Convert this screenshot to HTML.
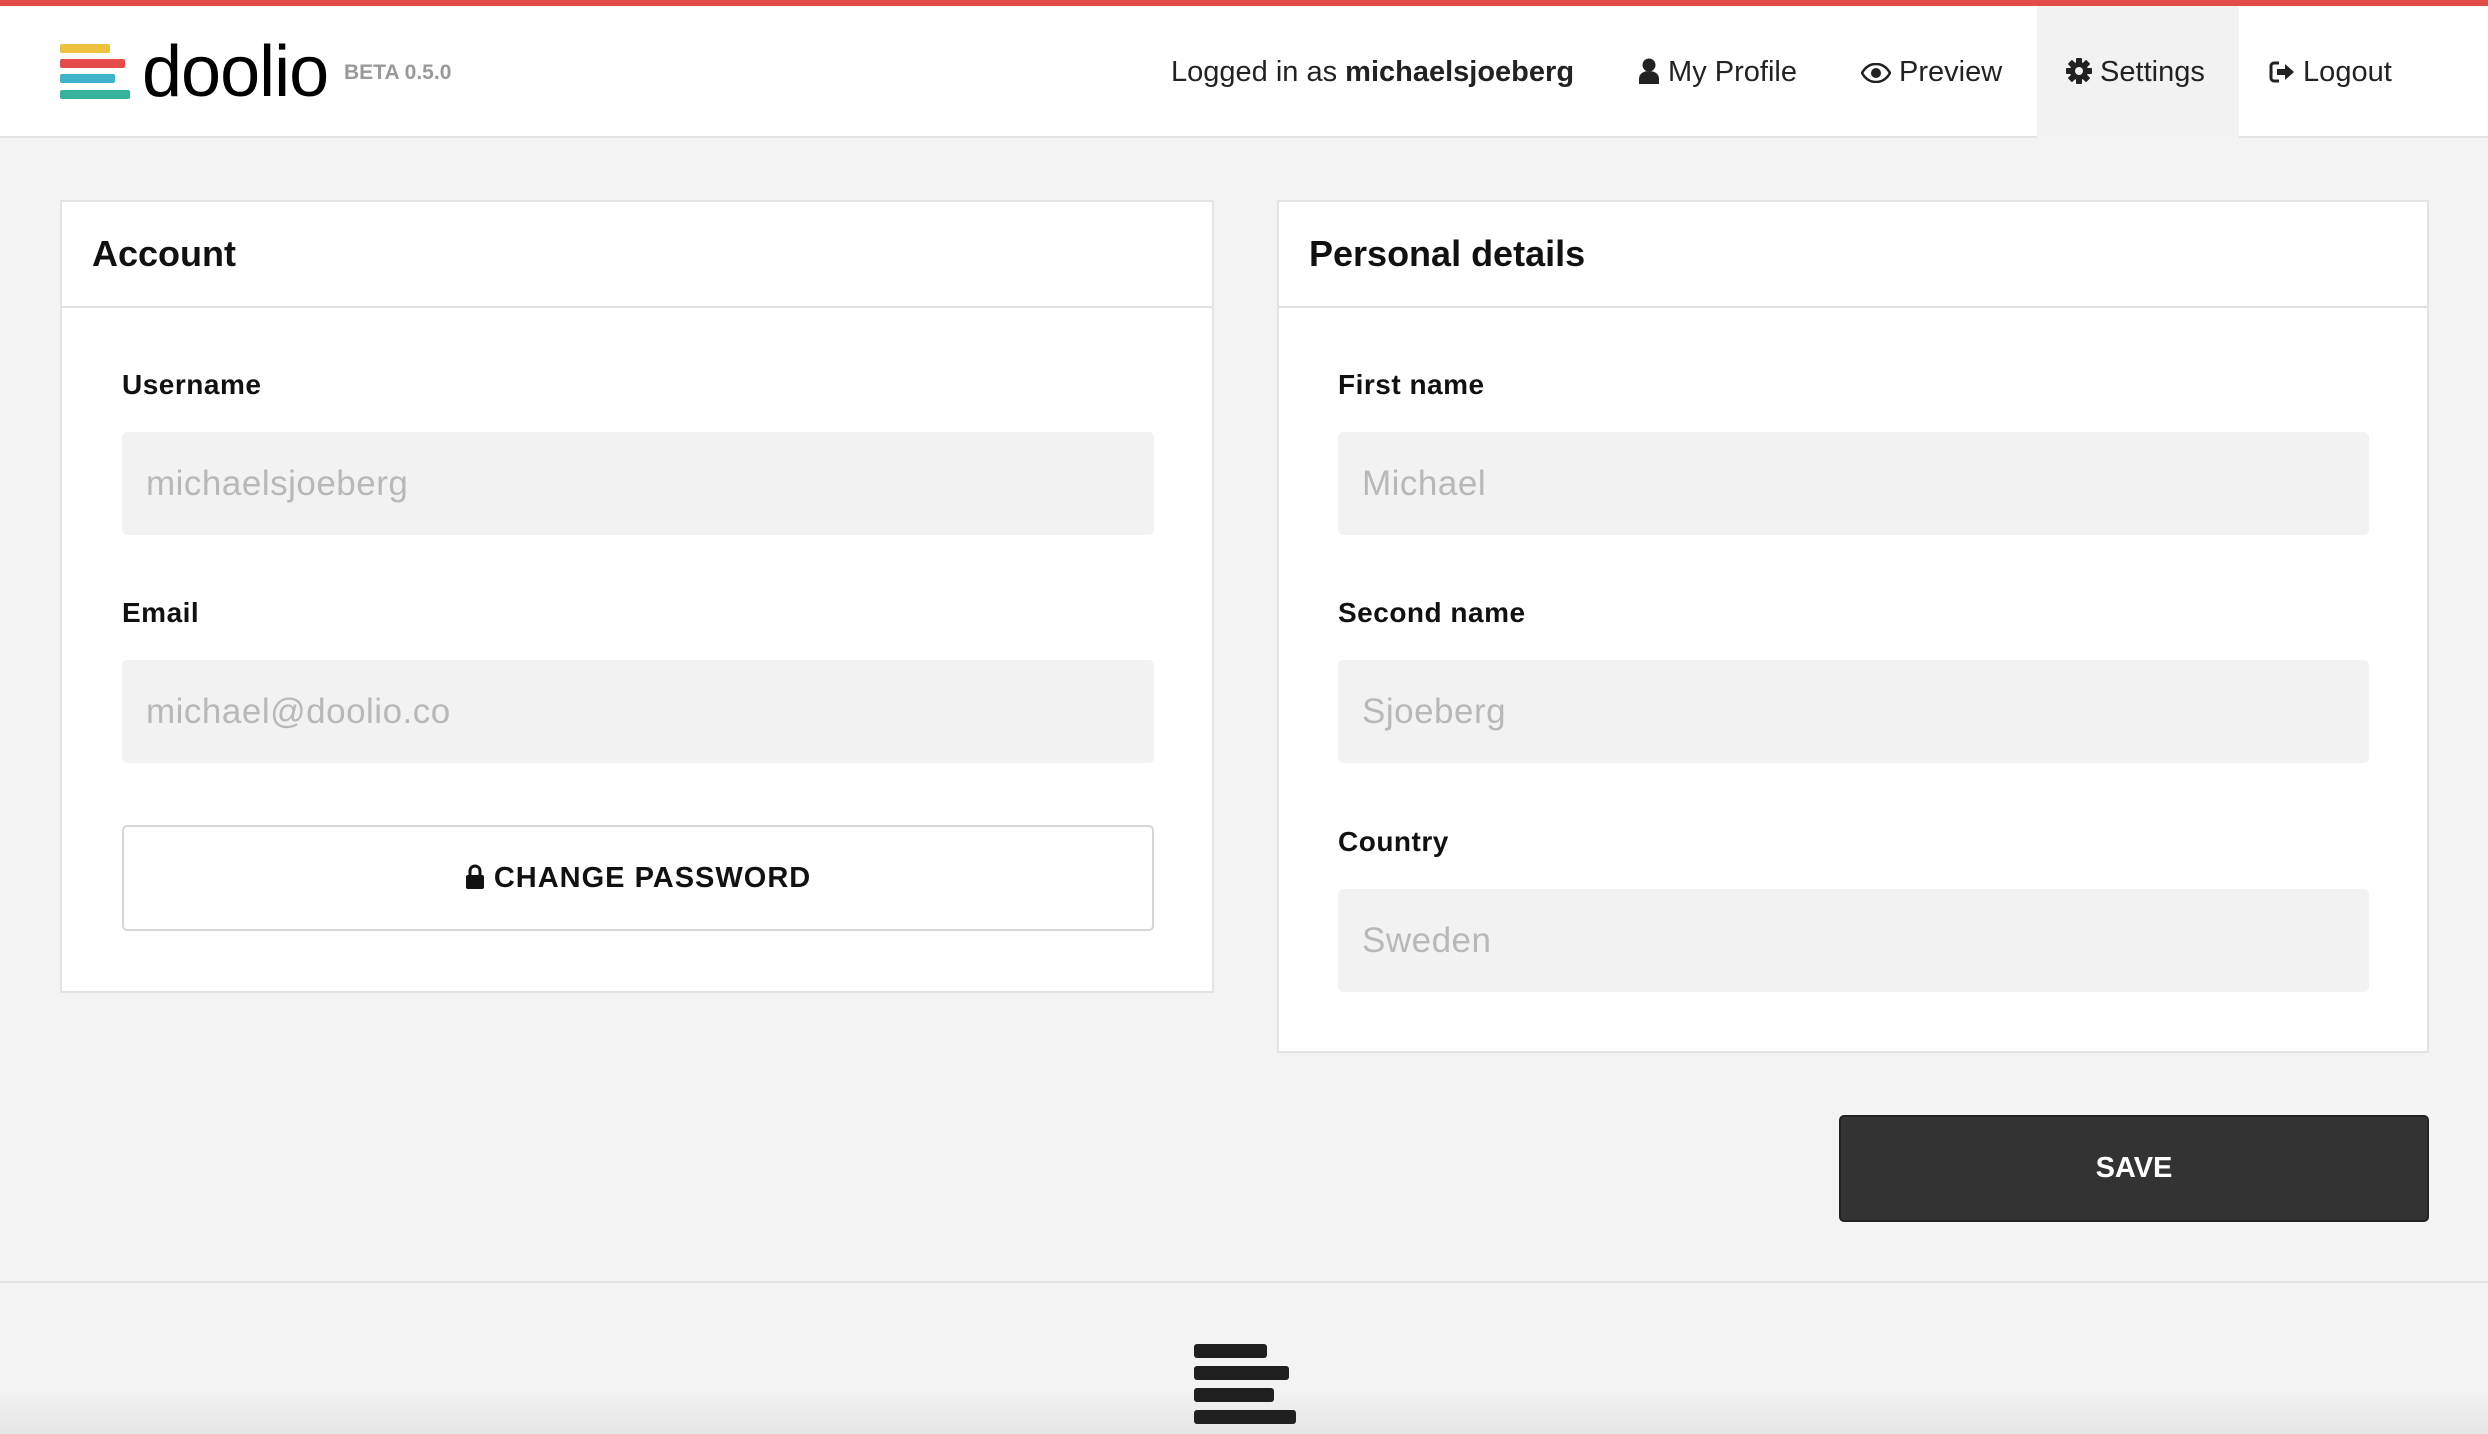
<!DOCTYPE html>
<html><head><meta charset="utf-8"><style>
*{box-sizing:border-box;margin:0;padding:0}
body{width:2488px;height:1434px;background:#f3f3f3;font-family:"Liberation Sans",sans-serif;color:#111;position:relative;overflow:hidden}
.abs{position:absolute}
.top{left:0;top:0;width:2488px;height:6px;background:#e34c48}
.hdr{left:0;top:6px;width:2488px;height:132px;background:#fff;border-bottom:2px solid #e2e2e2}
.bar{position:absolute;left:60px;height:9px;border-radius:2px}
.nav{top:54px;font-size:29px;color:#222;white-space:nowrap;line-height:36px}
.panel{background:#fff;border:2px solid #e3e3e3}
.ph{position:absolute;left:0;right:0;top:0;height:106px;border-bottom:2px solid #e3e3e3;font-size:36px;font-weight:bold;padding-left:30px;line-height:104px}
.lbl{font-size:28px;font-weight:bold;letter-spacing:.5px}
.inp{background:#f2f2f2;border-radius:5px;height:103px;font-size:35px;color:#b8b8b8;padding-left:24px;line-height:103px;letter-spacing:.5px}
</style></head><body>
<div class="abs top"></div>
<div class="abs hdr"></div>
<div class="bar" style="top:44px;width:50px;background:#ecc23f"></div>
<div class="bar" style="top:59px;width:65px;background:#e34c48"></div>
<div class="bar" style="top:74px;width:55px;background:#3fb2cc"></div>
<div class="bar" style="top:90px;width:70px;background:#36b39a"></div>
<div class="abs" style="left:142px;top:30px;font-size:72px;line-height:84px;color:#000;letter-spacing:-1px">doolio</div>
<div class="abs" style="left:344px;top:61px;font-size:21px;font-weight:bold;color:#999">BETA 0.5.0</div>
<div class="abs" style="left:2037px;top:6px;width:202px;height:132px;background:#f2f2f2"></div>
<div class="abs nav" style="left:1171px">Logged in as <b>michaelsjoeberg</b></div>
<div class="abs nav" style="left:1638px"><svg width="22" height="26" viewBox="0 0 22 26" style="vertical-align:-3px"><circle cx="11" cy="7" r="6.5" fill="#222"/><path d="M1 26v-5c0-5 4-8 10-8s10 3 10 8v5z" fill="#222"/></svg> My Profile</div>
<div class="abs nav" style="left:1861px"><svg width="30" height="20" viewBox="0 0 30 20" style="vertical-align:-2px"><path d="M1 10C5 3 10 1 15 1s10 2 14 9c-4 7-9 9-14 9S5 17 1 10z" fill="none" stroke="#222" stroke-width="2.5"/><circle cx="15" cy="10" r="5" fill="#222"/></svg> Preview</div>
<div class="abs nav" style="left:2066px"><svg width="26" height="26" viewBox="0 0 26 26" style="vertical-align:-3px"><g fill="#222"><circle cx="13" cy="13" r="9"/><rect x="10" y="0" width="6" height="26" rx="1"/><rect x="0" y="10" width="26" height="6" rx="1"/><rect x="10" y="0" width="6" height="26" rx="1" transform="rotate(45 13 13)"/><rect x="10" y="0" width="6" height="26" rx="1" transform="rotate(-45 13 13)"/></g><circle cx="13" cy="13" r="4" fill="#f2f2f2"/></svg> Settings</div>
<div class="abs nav" style="left:2269px"><svg width="26" height="24" viewBox="0 0 26 24" style="vertical-align:-3px"><path d="M10 3H5a3 3 0 0 0-3 3v12a3 3 0 0 0 3 3h5" fill="none" stroke="#222" stroke-width="3"/><path d="M8 9h8V4l9 8-9 8v-5H8z" fill="#222"/></svg> Logout</div>

<div class="abs panel" style="left:60px;top:200px;width:1154px;height:793px">
<div class="ph">Account</div></div>
<div class="abs lbl" style="left:122px;top:369px">Username</div>
<div class="abs inp" style="left:122px;top:432px;width:1032px">michaelsjoeberg</div>
<div class="abs lbl" style="left:122px;top:597px">Email</div>
<div class="abs inp" style="left:122px;top:660px;width:1032px">michael@doolio.co</div>
<div class="abs" style="left:122px;top:825px;width:1032px;height:106px;border:2px solid #d6d6d6;border-radius:5px;background:#fff;text-align:center;line-height:102px;font-size:29px;font-weight:bold;letter-spacing:1px"><svg width="20" height="26" viewBox="0 0 20 26" style="vertical-align:-3px"><path d="M5 11V7a5 5 0 0 1 10 0v4" fill="none" stroke="#111" stroke-width="3"/><rect x="1" y="11" width="18" height="14" rx="2" fill="#111"/></svg> CHANGE PASSWORD</div>

<div class="abs panel" style="left:1277px;top:200px;width:1152px;height:853px">
<div class="ph">Personal details</div></div>
<div class="abs lbl" style="left:1338px;top:369px">First name</div>
<div class="abs inp" style="left:1338px;top:432px;width:1031px">Michael</div>
<div class="abs lbl" style="left:1338px;top:597px">Second name</div>
<div class="abs inp" style="left:1338px;top:660px;width:1031px">Sjoeberg</div>
<div class="abs lbl" style="left:1338px;top:826px">Country</div>
<div class="abs inp" style="left:1338px;top:889px;width:1031px">Sweden</div>

<div class="abs" style="left:1839px;top:1115px;width:590px;height:107px;background:#333;border:2px solid #222;border-radius:5px;color:#fff;text-align:center;line-height:103px;font-size:29px;font-weight:bold">SAVE</div>

<div class="abs" style="left:0;top:1281px;width:2488px;height:2px;background:#e2e2e2"></div>
<div class="abs" style="left:0;top:1390px;width:2488px;height:44px;background:linear-gradient(#f2f2f2,#e6e6e6)"></div>
<div class="bar" style="left:1194px;top:1344px;width:73px;height:14px;background:#1f1f1f;border-radius:3px"></div>
<div class="bar" style="left:1194px;top:1366px;width:95px;height:14px;background:#1f1f1f;border-radius:3px"></div>
<div class="bar" style="left:1194px;top:1388px;width:80px;height:14px;background:#1f1f1f;border-radius:3px"></div>
<div class="bar" style="left:1194px;top:1410px;width:102px;height:14px;background:#1f1f1f;border-radius:3px"></div>
</body></html>
